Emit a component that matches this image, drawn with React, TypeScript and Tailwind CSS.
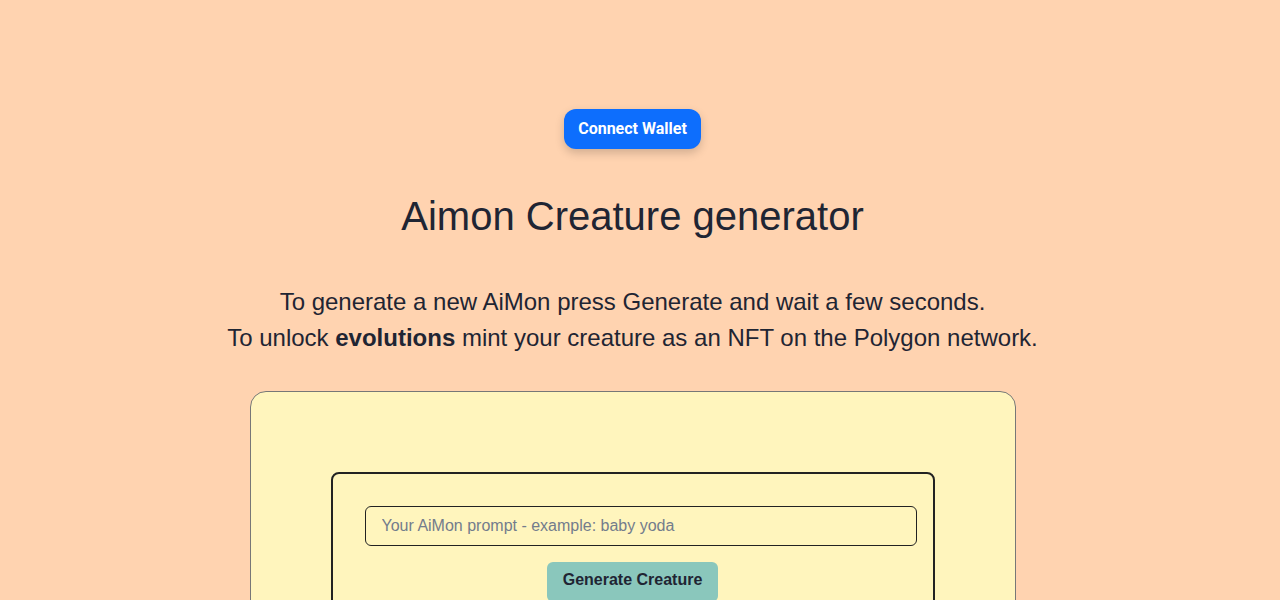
export default function App() {
  return (
    <div className="min-h-screen w-full bg-[#ffd3b0] text-[#1f2533] font-['Liberation_Sans',Arial,sans-serif] pr-[15px]">
      <div className="flex flex-col items-center pt-[109px] pb-16">
        <button className="h-10 px-3.5 rounded-xl bg-[#0d6efd] text-white text-[16px] font-bold font-['Roboto',sans-serif] shadow-[0_4px_10px_rgba(0,0,0,0.18)]">
          Connect Wallet
        </button>

        <h1 className="mt-[43px] text-[40px] leading-[48px] font-normal text-center">
          Aimon Creature generator
        </h1>

        <p className="mt-[44px] text-[24px] leading-[36px] text-center">
          To generate a new AiMon press Generate and wait a few seconds.
          <br />
          To unlock <b className="font-bold">evolutions</b> mint your creature as an NFT on the Polygon network.
        </p>

        <div className="mt-[35px] w-[766px] rounded-2xl border border-[#777] bg-[#fff5bd] p-20">
          <div className="rounded-lg border-2 border-[#222] pl-8 pr-4 pt-8 pb-8 flex flex-col items-center">
            <input
              type="text"
              placeholder="Your AiMon prompt - example: baby yoda"
              className="w-full h-10 rounded-md border border-[#222] bg-transparent px-4 text-[16px] text-[#1f2533] placeholder:text-[#737c8c] outline-none"
            />
            <button className="mt-4 ml-[-16px] h-10 pb-1 px-4 rounded-md bg-[#8ac7bc] text-[16px] font-bold text-[#1f2533]">
              Generate Creature
            </button>
          </div>
        </div>
      </div>
    </div>
  );
}
